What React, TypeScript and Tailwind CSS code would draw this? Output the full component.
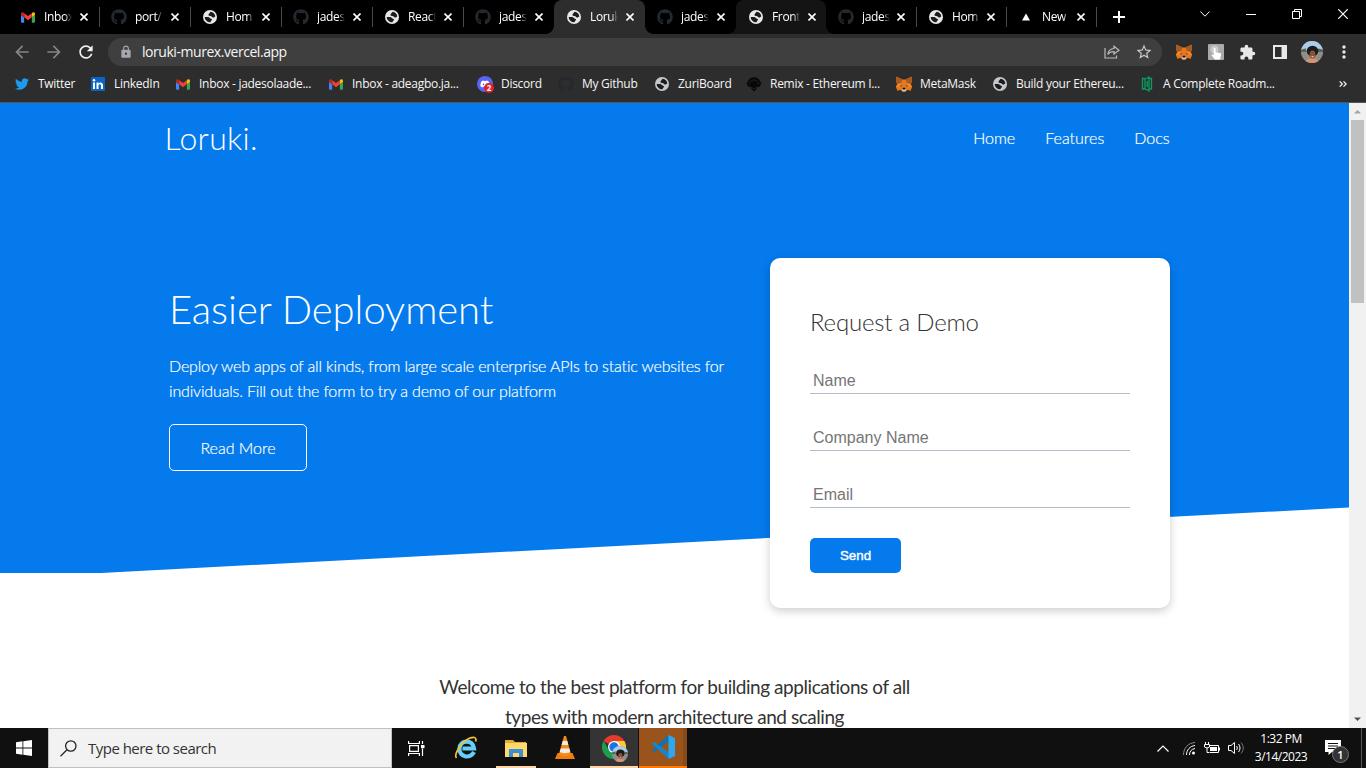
import React from "react";
import {
  MdArrowBack,
  MdArrowForward,
  MdExtension,
  MdLock,
  MdMoreVert,
  MdRefresh,
  MdStarBorder,
} from "react-icons/md";
import { FaGithub, FaTwitter, FaDiscord } from "react-icons/fa";

const SEGOE = "font-['Open_Sans','Noto_Sans',sans-serif]";

function Gmail({ className }: { className?: string }) {
  return (
    <svg viewBox="0 0 16 12" className={className}>
      <path d="M1.1 12H3.6V5.8L0 3.1V10.9C0 11.5.5 12 1.1 12Z" fill="#4285f4" />
      <path d="M12.4 12h2.5c.6 0 1.1-.5 1.1-1.1V3.1l-3.6 2.7Z" fill="#34a853" />
      <path d="M12.4 1.1v4.7L16 3.1V1.7C16 .3 14.4-.5 13.300.300Z" fill="#fbbc04" />
      <path d="M3.6 5.8V1.100L8 4.400l4.400-3.300V5.800L8 9.100Z" fill="#ea4335" />
      <path d="M0 1.700V3.100L3.600 5.800V1.100L2.700.300C1.600-.500 0 .300 0 1.700Z" fill="#c5221f" />
    </svg>
  );
}

function Fox({ className }: { className?: string }) {
  return (
    <svg viewBox="0 0 16 16" className={className}>
      <path d="M.5.600 6.200 3.600H9.800L15.500.600 16 5.500 14.800 8.200 16 11.200 14.600 14.800 10.800 13.800 9.500 15.500H6.500L5.200 13.800 1.400 14.800 0 11.200 1.200 8.200 0 5.500Z" fill="#e8761b" />
      <path d="M.5.600 6.200 3.600 5.500 7 1.200 8.200 0 5.500ZM15.500.600 9.800 3.600 10.500 7l4.300 1.200L16 5.500Z" fill="#a95a20" />
      <path d="M1.200 8.200 5.500 7 4.500 10.500 0 11.200ZM14.800 8.200 10.500 7l1 3.500 4.500.700Z" fill="#f08a2c" />
      <path d="M4.300 9 6.300 9.900 4.600 10.400ZM11.700 9 9.700 9.900l1.700.500Z" fill="#233447" />
      <path d="M5.200 13.800 6.600 12.600H9.400L10.800 13.800 9.500 15.500H6.500Z" fill="#d5bfb2" />
      <path d="M6.600 12.600 6.900 11.800H9.100L9.400 12.600 9.200 13.500H6.800Z" fill="#161616" />
    </svg>
  );
}

function Avatar({ className }: { className?: string }) {
  return (
    <svg viewBox="0 0 22 22" className={className}>
      <defs>
        <clipPath id="face">
          <circle cx="11" cy="11" r="11" />
        </clipPath>
      </defs>
      <g clipPath="url(#face)">
        <path d="M0 0H22V22H0Z" fill="#8d8f88" />
        <path d="M0 0H22V9.500H0Z" fill="#a9cdea" />
        <path d="M0 8.500 5 7.500V11H0ZM22 8.500 17 7.500V11H22Z" fill="#566451" />
        <ellipse cx="11.500" cy="10" rx="5.800" ry="5.200" fill="#1d1a1c" />
        <path d="M4 22C5 18 8 17.500 11.500 17.500S17 18.500 18 22Z" fill="#d99372" />
        <ellipse cx="11.500" cy="13.500" rx="2.900" ry="4" fill="#8d5038" />
        <path d="M10 15.300H13L11.500 16.400Z" fill="#eee" />
      </g>
    </svg>
  );
}

function Globe({ className }: { className?: string }) {
  return (
    <svg viewBox="0 0 14 14" className={`size-[14px] ${className}`}>
      <circle cx="7" cy="7" r="7" fill="currentColor" />
      <path
        d="M7.600 1.800C10.200 2 12.200 4 12.300 6.600L10.600 7.600C8.900 7.900 9.100 6.200 7.200 6.100 5.300 6 4.900 4.400 6 3.700Z"
        fill="#1c1c1c"
      />
      <path
        d="M1.700 6.900 5 7C7 7.200 6.600 8.700 8.600 8.900 9.700 9.500 8.700 10.400 8 11L7.500 12.300C4.300 12.300 1.800 10 1.700 6.900Z"
        fill="#1c1c1c"
      />
    </svg>
  );
}

function Close({ className }: { className?: string }) {
  return (
    <svg viewBox="0 0 8 8" className={className} stroke="currentColor" strokeWidth="1.600" fill="none">
      <path d="M.5.500 7.500 7.500M7.500.500.500 7.500" />
    </svg>
  );
}

type TabKind = "gmail" | "github" | "globe" | "vercel";
const tabs: { kind: TabKind; title: string; state?: "active" | "hover"; line?: boolean; w: string }[] = [
  { kind: "gmail", title: "Inbox", line: true, w: "w-[91px]" },
  { kind: "github", title: "port/", line: true, w: "w-[91px]" },
  { kind: "globe", title: "Hom", line: true, w: "w-[91px]" },
  { kind: "github", title: "jades", line: true, w: "w-[91px]" },
  { kind: "globe", title: "React", line: true, w: "w-[91px]" },
  { kind: "github", title: "jades", w: "w-[91px]" },
  { kind: "globe", title: "Loruk", state: "active", w: "w-[91px]" },
  { kind: "github", title: "jades", w: "w-[91px]" },
  { kind: "globe", title: "Front", state: "hover", w: "w-[90px]" },
  { kind: "github", title: "jades", line: true, w: "w-[90px]" },
  { kind: "globe", title: "Hom", line: true, w: "w-[90px]" },
  { kind: "vercel", title: "New", line: true, w: "w-[90px]" },
];

function TabIcon({ kind }: { kind: TabKind }) {
  if (kind === "gmail") return <Gmail className="h-[11px] w-[14px]" />;
  if (kind === "github") return <FaGithub className="size-4 text-[#24292f]" />;
  if (kind === "globe") return <Globe className="text-[#e8e8e8]" />;
  return (
    <svg viewBox="0 0 8 8" className="size-2">
      <path d="M4 .5 8 7.500H0Z" fill="#fff" />
    </svg>
  );
}

function TabStrip() {
  return (
    <div className="flex h-[34px] shrink-0 bg-black pl-[8px] text-white">
      {tabs.map((t, i) => (
        <div
          key={i}
          className={`relative flex h-[34px] shrink-0 items-center rounded-t-lg pl-[12px] ${t.w} ${
            t.state === "active" ? "bg-[#2d2d2d]" : t.state === "hover" ? "bg-[#141414]" : ""
          }`}
        >
          {t.state === "active" && (
            <>
              <span className="absolute bottom-0 -left-2 size-2 bg-[radial-gradient(circle_at_0_0,#000_7.500px,#2d2d2d_8px)]" />
              <span className="absolute -right-2 bottom-0 size-2 bg-[radial-gradient(circle_at_100%_0,#000_7.500px,#2d2d2d_8px)]" />
            </>
          )}
          {t.state === "hover" && (
            <>
              <span className="absolute bottom-0 -left-2 size-2 bg-[radial-gradient(circle_at_0_0,#000_7.500px,#141414_8px)]" />
              <span className="absolute -right-2 bottom-0 size-2 bg-[radial-gradient(circle_at_100%_0,#000_7.500px,#141414_8px)]" />
            </>
          )}
          <span className="flex w-4 shrink-0 items-center justify-center">
            <TabIcon kind={t.kind} />
          </span>
          <span className="ml-2 w-[28px] shrink-0 text-[12px] leading-4 tracking-[-0.35px] whitespace-nowrap [mask-image:linear-gradient(to_right,#000_75%,transparent)]">
            {t.title}
          </span>
          <Close className={`size-2 shrink-0 ${i > 8 ? "ml-[7px]" : "ml-[8px]"}`} />
          {t.line && <span className="-mr-px ml-auto h-5 w-px bg-[#4a4a4a]" />}
        </div>
      ))}
      <svg viewBox="0 0 12 12" className="mt-[11px] ml-[17px] size-3">
        <path d="M6 0V12M0 6H12" stroke="#fff" strokeWidth="2" />
      </svg>
      <div className="mr-[18px] ml-auto flex h-7 items-center text-white">
        <svg viewBox="0 0 10 6" className="h-[6px] w-[10px]" fill="none" stroke="currentColor">
          <path d="M.4.500 5 5.200 9.600.500" />
        </svg>
        <span className="ml-[36px] h-px w-[10px] bg-white" />
        <svg viewBox="0 0 10 10" className="ml-[36px] size-[10px]" fill="none" stroke="currentColor">
          <path d="M.5 2.500h7v7h-7ZM2.500 2V.500h7v7H8" />
        </svg>
        <svg viewBox="0 0 10 10" className="ml-[36px] size-[10px]" fill="none" stroke="currentColor" strokeWidth="1.200">
          <path d="M.2.200 9.800 9.800M9.800.200.200 9.800" />
        </svg>
      </div>
    </div>
  );
}

function Toolbar() {
  return (
    <div className="flex h-9 shrink-0 items-center bg-[#2d2d2d]">
      <MdArrowBack className="ml-[12px] size-5 text-[#858585]" />
      <MdArrowForward className="ml-[12px] size-5 text-[#858585]" />
      <MdRefresh className="ml-[12px] size-5 text-[#f1f1f1]" />
      <div className="ml-[12px] flex h-7 w-[1054px] items-center rounded-full bg-[#3f3f3f] pl-[11px]">
        <MdLock className="size-[14px] text-[#a5a8ad]" />
        <span className="ml-[9px] text-[14px] leading-5 tracking-[-0.45px] text-[#f5f5f5]">loruki-murex.vercel.app</span>
        <svg viewBox="0 0 16 14" className="mr-[15px] ml-auto h-[14px] w-4" fill="none" stroke="#bababa" strokeWidth="1.200">
          <path d="M1 3V13H12.500V10.500" />
          <path d="M10 1.200 15 5.200 10 9V6.700C7 6.600 5 7.700 3.800 9.300 4.300 6 6.200 3.800 10 3.500Z" />
        </svg>
        <MdStarBorder className="mr-[9px] size-[18px] text-[#c8c8c8]" />
      </div>
      <Fox className="ml-[14px] size-4" />
      <svg viewBox="0 0 16 16" className="ml-4 size-4">
        <rect width="16" height="16" rx="1" fill="#aaa" />
        <circle cx="6.500" cy="5.500" r="4" fill="#c9c9c9" />
        <path d="M5.700 4.500C5.700 3.600 7.600 3.600 7.600 4.500V8.200L12 9C13 9.200 13.300 10 13 11L12 15.500H7L3.600 11.500C3.400 10.700 4 10.200 4.700 10.600L5.700 11.200Z" fill="#fff" />
      </svg>
      <MdExtension className="ml-[15px] size-[17px] text-[#e8e8e8]" />
      <svg viewBox="0 0 14 14" className="ml-[17px] size-[14px]">
        <path d="M1 1H13V13H1Z" fill="none" stroke="#e8e8e8" strokeWidth="2" />
        <path d="M8.500 1H13V13H8.500Z" fill="#e8e8e8" />
      </svg>
      <Avatar className="ml-[14px] size-[22px]" />
      <MdMoreVert className="ml-[11px] size-5 text-[#e8e8e8]" />
    </div>
  );
}

const bookmarks: { icon: React.ReactNode; label: string; w: string }[] = [
  { icon: <FaTwitter className="size-[14px] text-[#1d9bf0]" />, label: "Twitter", w: "w-[76px]" },
  {
    icon: (
      <svg viewBox="0 0 14 14" className="size-[14px]">
        <rect width="14" height="14" rx="1" fill="#0a66c2" />
        <path d="M2 5.500H4V12H2ZM5.500 5.500H7.400V6.400C8.500 4.800 12 5 12 8.300V12H10V8.700C10 6.600 7.500 6.700 7.500 8.700V12H5.500Z" fill="#fff" />
        <circle cx="3" cy="3.300" r="1.200" fill="#fff" />
      </svg>
    ),
    label: "LinkedIn",
    w: "w-[85px]",
  },
  { icon: <Gmail className="h-[11px] w-[14px]" />, label: "Inbox - jadesolaade...", w: "w-[153px]" },
  { icon: <Gmail className="h-[11px] w-[14px]" />, label: "Inbox - adeagbo.ja...", w: "w-[149px]" },
  {
    icon: (
      <span className="relative flex size-4 items-center justify-center rounded-full bg-[#5865f2]">
        <FaDiscord className="size-[10px] text-white" />
        <span className="absolute -right-px -bottom-px flex size-[10px] items-center justify-center rounded-full bg-[#e02028] text-[8px] leading-none font-bold text-white">2</span>
      </span>
    ),
    label: "Discord",
    w: "w-[81px]",
  },
  { icon: <FaGithub className="size-4 text-[#24292f]" />, label: "My Github", w: "w-[96px]" },
  { icon: <Globe className="text-[#c4c7cc]" />, label: "ZuriBoard", w: "w-[92px]" },
  {
    icon: (
      <svg viewBox="0 0 16 16" className="size-4">
        <path d="M3 3.500C5 .500 11 .500 13 3.500L15.500 7.500 13.500 11 12 10.500 10 13.500 8 15.500 6 13.500 4 10.500 2.500 11 .500 7.500Z" fill="#080808" />
        <path d="M3.500 8.500C2.500 2.500 13.500 2.500 12.500 8.500M4.500 11 8 13 11.500 11" stroke="#303030" fill="none" strokeWidth=".6" />
      </svg>
    ),
    label: "Remix - Ethereum I...",
    w: "w-[150px]",
  },
  { icon: <Fox className="size-4" />, label: "MetaMask", w: "w-[96px]" },
  { icon: <Globe className="text-[#c4c7cc]" />, label: "Build your Ethereu...", w: "w-[147px]" },
  {
    icon: (
      <svg viewBox="0 0 12 16" className="h-4 w-3" fill="none" stroke="#0b9b63" strokeWidth="1.300">
        <path d="M4 2.500H1.500V13H4M4 3.300 8 1V15L4 12.700ZM8 2.500H10.500V13H8" />
        <path d="M6.200 5V11" />
      </svg>
    ),
    label: "A Complete Roadm...",
    w: "w-[180px]",
  },
];

function Bookmarks() {
  return (
    <div className="flex h-[33px] shrink-0 items-center border-b border-[#555] bg-[#2d2d2d] pb-[4px] pl-[14px] text-[12px] leading-4 tracking-[-0.28px] text-[#f5f5f5]">
      {bookmarks.map((b) => (
        <div key={b.label} className={`flex shrink-0 items-center whitespace-nowrap ${b.w}`}>
          <span className="flex w-4 shrink-0 justify-center">{b.icon}</span>
          <span className="ml-2">{b.label}</span>
        </div>
      ))}
      <svg viewBox="0 0 8 6" className="mr-[19px] ml-auto h-[6px] w-2" fill="none" stroke="#eee" strokeWidth="1.300">
        <path d="M.7.400 3.300 3 .700 5.600M4.500.400 7.100 3 4.500 5.600" />
      </svg>
    </div>
  );
}

function Field({ label }: { label: string }) {
  return (
    <input
      placeholder={label}
      className="mb-[30px] block h-[27px] w-full border-b border-[#b4becb] px-[3px] pt-[3px] text-base leading-none font-[Liberation_Sans,Arial,sans-serif] placeholder:text-[#757575]"
    />
  );
}

function Site() {
  return (
    <div className="flex h-[625px] shrink-0 overflow-hidden">
      <div className="flex w-[1349px] shrink-0 flex-col bg-white font-[Lato,sans-serif] text-[#333]">
        <div className="relative h-[470px] shrink-0">
          <div className="absolute inset-0 bg-[#047aed] [clip-path:polygon(0_0,100%_0,100%_404.500px,101px_100%,0_100%)]" />
          <div className="relative mx-auto w-[1020px] text-white">
            <nav className="flex h-[70px] items-center justify-between">
              <div className="text-[32px] leading-[38px] font-light tracking-[0.3px]">Loruki.</div>
              <ul className="flex gap-[30px] pr-[15px] text-base leading-6 font-light [-webkit-text-stroke:0.2px_white]">
                <li>Home</li>
                <li>Features</li>
                <li>Docs</li>
              </ul>
            </nav>
            <div className="flex pl-[4.500px]">
              <div className="w-[601px] pt-[112px]">
                <h1 className="text-[40px] leading-[48px] font-light tracking-[-0.05px]">Easier Deployment</h1>
                <p className="mt-5 w-[570px] text-base leading-[25px] font-light tracking-[-0.16px] [-webkit-text-stroke:0.2px_white]">
                  Deploy web apps of all kinds, from large scale enterprise APIs to static websites for individuals. Fill out the form to try a demo of our platform
                </p>
                <button className="mt-[21px] h-[47px] w-[138px] rounded-[5px] border border-white pt-px text-base font-light [-webkit-text-stroke:0.2px_white]">
                  Read More
                </button>
              </div>
              <form className="mt-[85px] h-[350px] w-[400px] shrink-0 rounded-[10px] bg-white p-10 text-[#333] shadow-[0_3px_10px_rgba(0,0,0,0.2)]">
                <h2 className="mt-[10px] mb-[30px] text-2xl leading-[28.800px] font-light tracking-[-0.2px]">Request a Demo</h2>
                <Field label="Name" />
                <Field label="Company Name" />
                <Field label="Email" />
                <button
                  type="button"
                  className="flex h-[35px] w-[91px] items-center justify-center rounded-[5px] bg-[#047aed] pt-px text-[13.333px] text-white font-[Liberation_Sans,Arial,sans-serif] [-webkit-text-stroke:0.4px_white]"
                >
                  Send
                </button>
              </form>
            </div>
          </div>
        </div>
        <p className="mx-auto mt-[99px] w-[500px] text-center text-[19px] leading-[30px] tracking-[-0.45px]">
          Welcome to the best platform for building applications of all types with modern architecture and scaling
        </p>
      </div>
      <div className="flex grow flex-col items-center justify-between bg-[#f1f1f1]">
        <svg viewBox="0 0 17 17" className="size-[17px]">
          <path d="M5 10.500H12L8.500 7Z" fill="#a3a3a3" />
        </svg>
        <div className="mb-auto h-[183px] w-[13px] bg-[#c1c1c1]" />
        <svg viewBox="0 0 17 17" className="size-[17px]">
          <path d="M5 6.500H12L8.500 10Z" fill="#505050" />
        </svg>
      </div>
    </div>
  );
}

function ChromeLogo() {
  return (
    <span className="relative">
      <svg viewBox="0 0 24 24" className="size-6">
        <path d="M12 12 1.600 6A12 12 0 0 1 22.400 6Z" fill="#e33b2e" />
        <path d="M12 12V6H22.400A12 12 0 0 1 12 24Z" fill="#fcc934" />
        <path d="M12 24A12 12 0 0 1 1.600 6L6.800 15 12 12 17.200 15Z" fill="#1e9e4a" />
        <circle cx="12" cy="12" r="6" fill="#fff" />
        <circle cx="12" cy="12" r="4.700" fill="#1a73e8" />
      </svg>
      <Avatar className="absolute -right-[2px] -bottom-[3px] size-4" />
    </span>
  );
}

function Taskbar() {
  return (
    <div className="flex h-10 shrink-0 bg-[#101010] text-white">
      <div className="flex w-12 items-center justify-center">
        <svg viewBox="0 0 16 16" className="size-4" fill="#fff">
          <path d="M0 2.200 6.500 1.300V7.500H0ZM7.300 1.200 16 0V7.500H7.300ZM0 8.400H6.500V14.700L0 13.800ZM7.300 8.400H16V16L7.300 14.800Z" />
        </svg>
      </div>
      <div className="flex w-[344px] items-center border border-[#c0c0c0] bg-[#f2f2f2] pl-[11px]">
        <svg viewBox="0 0 17 17" className="size-[17px]" fill="none" stroke="#222" strokeWidth="1.300">
          <circle cx="10.800" cy="6" r="5.200" />
          <path d="M7 9.700.500 16.300" />
        </svg>
        <span className="ml-[11px] text-[15px] leading-5 tracking-[-0.52px] text-[#333]">Type here to search</span>
      </div>
      <div className="flex w-[48px] items-center justify-center">
        <svg viewBox="0 0 17 15" className="h-[15px] w-[17px]" fill="none" stroke="#fff" strokeWidth="1.200">
          <path d="M.6 0V2.500H11.400V0M.600 15V12.500H11.400V15M1.600 4.600H10.400V10.400H1.600ZM14.500 0V3M14.500 7.500V15" />
          <path d="M13 4H16.500V7.200H13Z" fill="#fff" stroke="none" />
        </svg>
      </div>
      <div className="flex w-[52px] items-center justify-center">
        <svg viewBox="0 0 24 24" className="size-6" fill="none">
          <path d="M20 16C16 23.500 5 21 5.500 12.500 6 3.500 19 3 20 12.500H8.500" stroke="#62d0f8" strokeWidth="4.200" />
          <path d="M2.500 22C-1.500 18 11 .500 20.500 1.500 22.500 2 22 4.500 21.500 5.500" stroke="#f5c331" strokeWidth="1.700" />
        </svg>
      </div>
      <div className="ml-[4px] flex h-10 w-[40px] flex-col items-center justify-end border-b-2 border-[#ffd3a8]">
        <svg viewBox="0 0 22 19" className="mb-[8px] h-[19px] w-[22px]">
          <path d="M0 1H8L10 3H21V18H0Z" fill="#e9a92f" />
          <path d="M0 4H22V18H0Z" fill="#ffd96b" />
          <path d="M4 18V11C4 10.400 4.400 10 5 10H17C17.600 10 18 10.400 18 11V18H14V14H8V18Z" fill="#3b8ed8" />
        </svg>
      </div>
      <div className="ml-[4px] flex w-[50px] items-center justify-center pr-px">
        <svg viewBox="0 0 20 24" className="h-6 w-5">
          <path d="M2.500 17H17.500L20 23H0Z" fill="#ef7d0a" />
          <path d="M9 0H11L16 18C15 20.500 5 20.500 4 18Z" fill="#f58b12" />
          <path d="M7.700 5H12.300L13.300 9H6.700ZM5.700 12.500H14.300L15.200 16C13 17.500 7 17.500 4.800 16Z" fill="#eee" />
        </svg>
      </div>
      <div className="flex w-12 items-center justify-center border-b-2 border-[#ffd3a8] bg-[#343434]">
        <ChromeLogo />
      </div>
      <div className="ml-px flex w-12 items-center justify-center border-b-2 border-[#ff7a00] bg-[linear-gradient(to_right,#9a531b_44px,#874a1b_44px)]">
        <svg viewBox="0 0 24 24" className="size-6">
          <path d="M17.500 0 1 15.200 3.200 17.200 18 6Z" fill="#0f72b5" />
          <path d="M17.500 24 1 8.800 3.200 6.800 18 18Z" fill="#1687cf" />
          <path d="M17.500 0 24 3V21L17.500 24Z" fill="#2aa8f2" />
        </svg>
      </div>
      <div className="ml-auto flex items-center">
        <svg viewBox="0 0 12 7" className="h-[7px] w-3" fill="none" stroke="#fff" strokeWidth="1.200">
          <path d="M.5 6.500 6 1 11.500 6.500" />
        </svg>
        <svg viewBox="0 0 14 14" className="ml-[13px] size-[14px]" fill="none" stroke="#fff">
          <path d="M1.500 14C1.500 7 6 2 13 1.500" stroke="#888" />
          <path d="M4.500 14C4.500 9 8 5 13 4.500M7.500 14C7.500 10.500 9.500 8 13 7.500" />
          <circle cx="11.500" cy="12" r="1.500" fill="#fff" stroke="none" />
        </svg>
        <svg viewBox="0 0 17 12" className="ml-[8px] h-3 w-[17px]" fill="none" stroke="#fff">
          <path d="M5.500 3.500H14.500V10.500H5.500M15.500 5.500V8.500M1.500 0V2.500M4.500 0V2.500M.5 2.500H5.500V5L3 6 .500 5ZM3 6V10.500H5" />
          <path d="M6 5H13V9H6Z" fill="#fff" stroke="none" />
        </svg>
        <svg viewBox="0 0 16 14" className="ml-[7px] h-[14px] w-4" fill="none" stroke="#fff">
          <path d="M.5 4.500H3L6.500 1.500V12.500L3 9.500H.500ZM8.500 5C9.500 6 9.500 8 8.500 9M10.500 3C12.500 5 12.500 9 10.500 11" />
          <path d="M13 1.500C16 5 16 9 13 12.500" stroke="#777" />
        </svg>
        <div className="ml-[8px] w-[58px] text-center text-[12px] leading-[18px] tracking-[-0.5px] whitespace-nowrap">
          <div>1:32 PM</div>
          <div>3/14/2023</div>
        </div>
        <div className="relative ml-[14px] h-[24px] w-[24px]">
          <svg viewBox="0 0 16 16" className="mt-[4px] ml-[1px] size-4">
            <path d="M0 0H16V12H7L3.500 15V12H0Z" fill="#fff" />
            <path d="M3 3.500H13M3 6H13M3 8.500H10" stroke="#101010" />
          </svg>
          <span className="absolute top-[10px] left-[8px] flex size-[17px] items-center justify-center rounded-full border border-[#777] bg-[#333] text-[11px] leading-none font-semibold">
            1
          </span>
        </div>
        <span className="ml-[13px] h-10 w-px bg-[#555]" />
        <span className="w-[4px]" />
      </div>
    </div>
  );
}

export default function App() {
  return (
    <div className={`flex h-[768px] w-[1366px] flex-col overflow-hidden ${SEGOE} font-normal`}>
      <TabStrip />
      <Toolbar />
      <Bookmarks />
      <Site />
      <Taskbar />
    </div>
  );
}
